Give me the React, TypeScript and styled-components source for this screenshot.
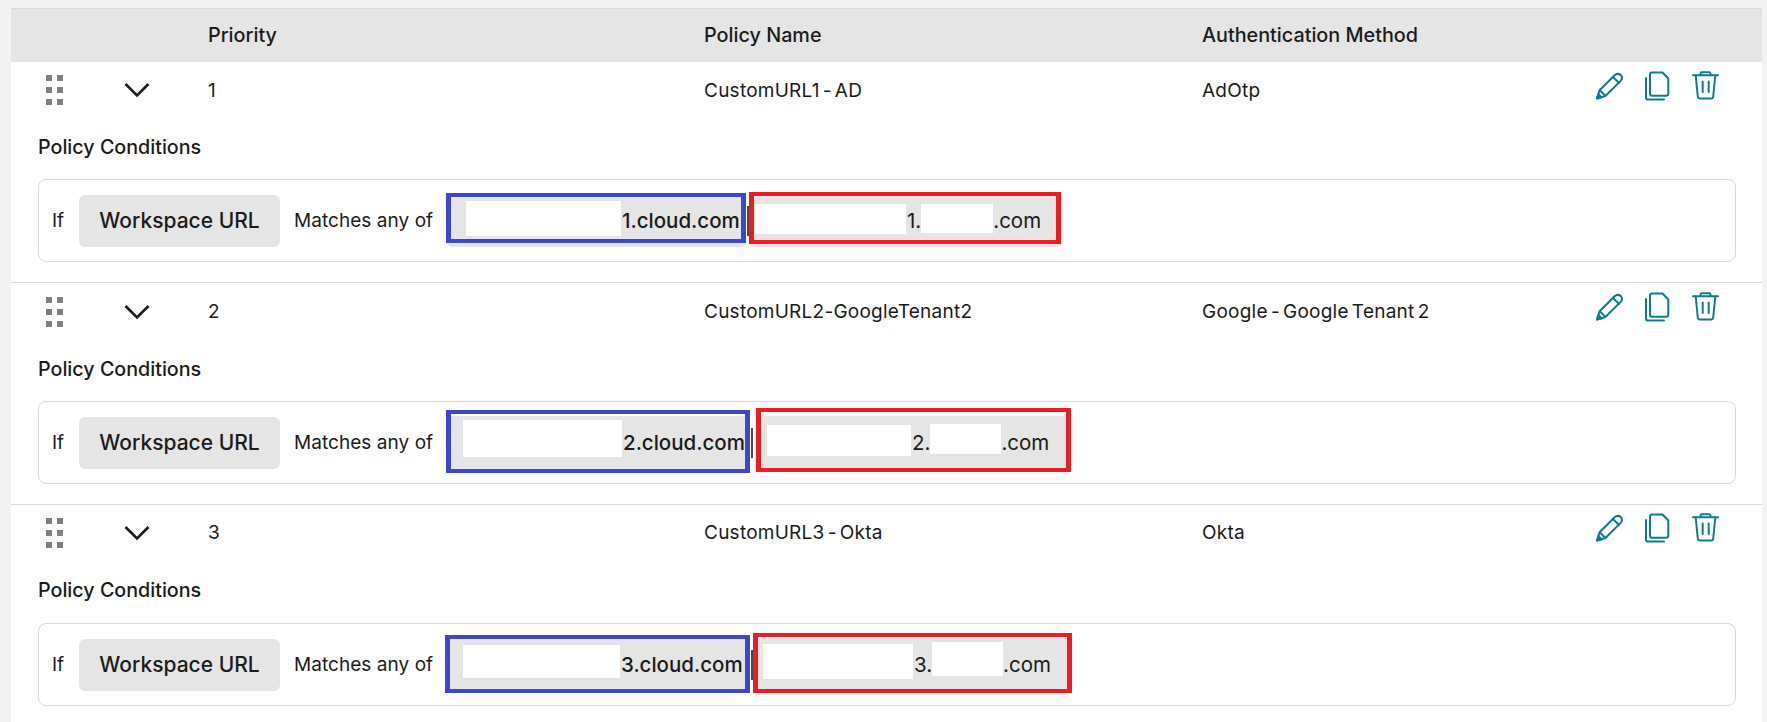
import React from "react";
import styled, { createGlobalStyle } from "styled-components";

const Global = createGlobalStyle`
  html, body { margin: 0; padding: 0; height: 100%; overflow: hidden; background: #f3f3f3; }
  body { font-family: Inter, "Liberation Sans", sans-serif; color: #1b1b1b; }
`;

const Page = styled.div`
  box-sizing: border-box;
  height: 722px;
  padding: 8px 5px 0 11px;
  overflow: hidden;
`;

const Panel = styled.div`
  background: #fff;
  height: 714px;
  overflow: hidden;
`;

const HeaderRow = styled.div`
  box-sizing: border-box;
  height: 54px;
  background: #e5e5e5;
  border-top: 1px solid #d9d9d9;
  display: grid;
  grid-template-columns: 496px 498px 1fr;
  align-items: center;
  padding: 0 0 2px 197px;
  font-size: 19.8px;
  font-weight: 500;
`;

const HeaderCell = styled.div`
  white-space: nowrap;
`;

const PolicyRow = styled.section<{ $first?: boolean; $lift: number }>`
  box-sizing: border-box;
  height: ${(p) => (p.$first ? 220 : 222)}px;
  border-top: ${(p) => (p.$first ? "none" : "1px solid #d9d9d9")};
  padding-top: ${(p) => (p.$first ? 13 : 14 - p.$lift)}px;
`;

const Summary = styled.div`
  display: grid;
  grid-template-columns: 113px 84px 496px 498px 300px 1fr;
  height: 26px;
  align-items: center;
  font-size: 19px;
  letter-spacing: 0.25px;
  word-spacing: -2.5px;
`;

const DragHandle = styled.div<{ $nudge: number }>`
  display: grid;
  grid-template-columns: 6px 6px;
  grid-auto-rows: 6px;
  column-gap: 5px;
  row-gap: 6px;
  align-self: start;
  margin-top: ${(p) => p.$nudge}px;
  padding-left: 35px;
`;

const Dot = styled.span`
  background: #808080;
`;

const Cell = styled.div`
  white-space: nowrap;
`;

const ChevronWrap = styled.div`
  display: flex;
`;

const Actions = styled.div`
  display: flex;
  justify-content: flex-end;
  align-self: start;
  margin-top: -4px;
  gap: 22px;
  padding-right: 43px;
  color: #0e7c8f;
`;

const ConditionsTitle = styled.div<{ $gap: number }>`
  margin: ${(p) => p.$gap}px 0 0 27px;
  font-size: 19.7px;
  font-weight: 500;
  line-height: 26px;
`;

const ConditionsBox = styled.div<{ $gap: number }>`
  position: relative;
  box-sizing: border-box;
  margin: ${(p) => p.$gap}px 26px 0 27px;
  height: 83px;
  border: 1px solid #d9d9d9;
  border-radius: 8px;
  display: flex;
  align-items: center;
  padding-left: 13px;
  font-size: 19px;
`;

const IfLabel = styled.span`
  width: 27px;
`;

const FieldChip = styled.div`
  width: 201px;
  height: 52px;
  background: #e5e5e5;
  border-radius: 6px;
  display: flex;
  align-items: center;
  justify-content: center;
  font-size: 21px;
  font-weight: 500;
`;

const Operator = styled.span`
  margin: 0 13px 0 14px;
  width: 140px;
  white-space: nowrap;
  letter-spacing: 0.05px;
`;

const ValueList = styled.div`
  display: flex;
  align-items: stretch;
`;

const ValuePill = styled.div<{ $width: number; $pad: number }>`
  box-sizing: border-box;
  width: ${(p) => p.$width}px;
  height: 53px;
  padding-left: ${(p) => p.$pad}px;
  background: #e5e5e5;
  border-radius: 5px;
  display: flex;
  align-items: flex-start;
  font-size: 20.5px;
`;

const Divider = styled.span<{ $gap: number }>`
  width: 2px;
  height: 30px;
  align-self: center;
  background: #4a4a55;
  margin: 0 ${(p) => p.$gap}px 0 1px;
`;

const Redaction = styled.span<{ $width: number; $top: number; $height: number }>`
  flex: none;
  width: ${(p) => p.$width}px;
  height: ${(p) => p.$height}px;
  margin-top: ${(p) => p.$top}px;
  background: #fff;
`;

const ValueText = styled.span<{ $emphasis?: boolean; $after?: number }>`
  align-self: center;
  white-space: nowrap;
  margin-left: ${(p) => p.$after ?? 0}px;
  font-weight: ${(p) => (p.$emphasis ? 500 : 400)};
`;

const Annotation = styled.div<{ $color: string; $x: number; $y: number; $w: number; $h: number }>`
  position: absolute;
  box-sizing: border-box;
  left: ${(p) => p.$x}px;
  top: ${(p) => p.$y}px;
  width: ${(p) => p.$w}px;
  height: ${(p) => p.$h}px;
  border-style: solid;
  border-width: 4px 5px;
  border-color: ${(p) => p.$color};
`;

const IconSvg = styled.svg`
  display: block;
  fill: none;
  stroke: currentColor;
  stroke-width: 2;
  stroke-linejoin: round;
  stroke-linecap: round;
`;

const Chevron = () => (
  <IconSvg width="26" height="16" viewBox="0 0 26 16">
    <path d="M1.5 2 13 13.5 24.5 2" strokeWidth="2.6" stroke="#1b1b1b" strokeLinecap="butt" strokeLinejoin="miter" />
  </IconSvg>
);

const Pencil = () => (
  <IconSvg width="27" height="29" viewBox="0 0 27 29" strokeWidth="2.3">
    <path d="M1 27.5 3.6 19.3 18.6 4.3Q21.6 1.6 24.6 3.9 27.4 6.9 24.6 9.9L9.4 25Z" />
    <path d="M17 6 23 12" />
    <path d="M4 19.5 9 24.5" />
    <path d="M1 27.5 2.3 23 5.8 26.4Z" fill="currentColor" />
  </IconSvg>
);

const Copy = () => (
  <IconSvg width="25" height="30" viewBox="0 0 25 30" strokeWidth="1.8">
    <path d="M7 1.5H17.5L23.3 7.5V22.5Q23.3 24.8 21 24.8H7Q5 24.8 5 22.5V3.5Q5 1.5 7 1.5Z" />
    <path d="M1 7V26.5Q1 28.6 3 28.6H19" />
  </IconSvg>
);

const Trash = () => (
  <IconSvg width="27" height="29" viewBox="0 0 27 29" strokeWidth="1.8">
    <path d="M1 4.3H26" />
    <path d="M8.5 4V2.6Q8.5 1.3 10 1.3H17Q18.5 1.3 18.5 2.6V4" />
    <path d="M3.7 4.5 5.8 25.5Q6 27.6 8 27.6H19Q21 27.6 21.2 25.5L23.3 4.5" />
    <path d="M10.7 10.5V21M16.7 10.5V21" />
  </IconSvg>
);

type R = [number, number, number];
type Box = [number, number, number, number];
type Policy = {
  n: string;
  name: string;
  auth: string;
  lift: number;
  nudge: number;
  titleGap: number;
  boxGap: number;
  pill1: [number, number];
  gap: number;
  pill2: [number, number];
  red: [R, R, R];
  blueBox: Box;
  redBox: Box;
};

const policies: Policy[] = [
  {
    n: "1", name: "CustomURL1 - AD", auth: "AdOtp",
    lift: 0, nudge: 0, titleGap: 33, boxGap: 19,
    pill1: [299, 19], gap: 0, pill2: [312, 5],
    red: [[155, 7, 35], [151, 10, 30], [72, 10, 29]],
    blueBox: [407, 13, 300, 50], redBox: [710, 12, 312, 52],
  },
  {
    n: "2", name: "CustomURL2-GoogleTenant2", auth: "Google - Google Tenant 2",
    lift: 1, nudge: 1, titleGap: 34, boxGap: 19,
    pill1: [303, 16], gap: 3, pill2: [314, 10],
    red: [[159, 4, 37], [144, 9, 31], [71, 8, 30]],
    blueBox: [407, 8, 304, 63], redBox: [717, 6, 315, 64],
  },
  {
    n: "3", name: "CustomURL3 - Okta", auth: "Okta",
    lift: 2, nudge: 1, titleGap: 34, boxGap: 20,
    pill1: [303, 16], gap: 3, pill2: [314, 6],
    red: [[157, 7, 33], [150, 6, 35], [71, 4, 34]],
    blueBox: [406, 11, 305, 58], redBox: [714, 9, 319, 60],
  },
];

export default function App() {
  return (
    <Page>
      <Global />
      <Panel>
        <HeaderRow>
          <HeaderCell>Priority</HeaderCell>
          <HeaderCell>Policy Name</HeaderCell>
          <HeaderCell>Authentication Method</HeaderCell>
        </HeaderRow>
        {policies.map((p, i) => (
          <PolicyRow key={p.n} $first={i === 0} $lift={p.lift}>
            <Summary>
              <DragHandle $nudge={p.nudge}>
                {Array.from({ length: 6 }).map((_, d) => (
                  <Dot key={d} />
                ))}
              </DragHandle>
              <ChevronWrap>
                <Chevron />
              </ChevronWrap>
              <Cell>{p.n}</Cell>
              <Cell>{p.name}</Cell>
              <Cell>{p.auth}</Cell>
              <Actions>
                <Pencil />
                <Copy />
                <Trash />
              </Actions>
            </Summary>
            <ConditionsTitle $gap={p.titleGap}>Policy Conditions</ConditionsTitle>
            <ConditionsBox $gap={p.boxGap}>
              <IfLabel>If</IfLabel>
              <FieldChip>Workspace URL</FieldChip>
              <Operator>Matches any of</Operator>
              <ValueList>
                <ValuePill $width={p.pill1[0]} $pad={p.pill1[1]}>
                  <Redaction $width={p.red[0][0]} $top={p.red[0][1]} $height={p.red[0][2]} />
                  <ValueText $emphasis $after={1}>{p.n}.cloud.com</ValueText>
                </ValuePill>
                <Divider $gap={p.gap + 1} />
                <ValuePill $width={p.pill2[0]} $pad={p.pill2[1]}>
                  <Redaction $width={p.red[1][0]} $top={p.red[1][1]} $height={p.red[1][2]} />
                  <ValueText $after={1}>{p.n}.</ValueText>
                  <Redaction $width={p.red[2][0]} $top={p.red[2][1]} $height={p.red[2][2]} />
                  <ValueText>.com</ValueText>
                </ValuePill>
              </ValueList>
              <Annotation $color="#3f48cc" $x={p.blueBox[0]} $y={p.blueBox[1]} $w={p.blueBox[2]} $h={p.blueBox[3]} />
              <Annotation $color="#ed1c24" $x={p.redBox[0]} $y={p.redBox[1]} $w={p.redBox[2]} $h={p.redBox[3]} />
            </ConditionsBox>
          </PolicyRow>
        ))}
      </Panel>
    </Page>
  );
}
